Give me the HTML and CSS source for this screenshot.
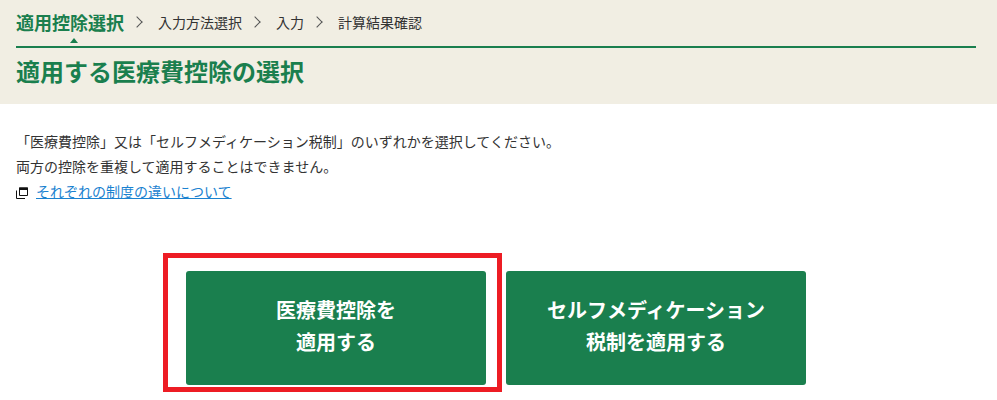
FILE: index.html
```html
<!DOCTYPE html>
<html lang="ja">
<head>
<meta charset="utf-8">
<meta name="viewport" content="width=device-width,initial-scale=1">
<title>適用する医療費控除の選択</title>
<link rel="stylesheet" href="styles.css">
</head>
<body>

<!-- ======= HEADER ======= -->
<header class="page-head">
  <ol class="steps">
    <li class="step current">適用控除選択</li>
    <li class="step">入力方法選択</li>
    <li class="step">入力</li>
    <li class="step">計算結果確認</li>
  </ol>
  <h1 class="page-title">適用する医療費控除の選択</h1>
</header>

<!-- ======= CONTENT ======= -->
<main class="content">
  <p class="lead">「医療費控除」又は「セルフメディケーション税制」のいずれかを選択してください。</p>
  <p class="lead">両方の控除を重複して適用することはできません。</p>
  <p class="lead link-row">
    <svg class="icon-window" viewBox="0 0 12 12" width="12" height="12" aria-hidden="true">
      <path d="M3.5 1v7.5h8V1z" fill="none" stroke="#111"/>
      <path d="M3 .5h9v2.5H3z" fill="#111"/>
      <path d="M.5 3.5v8h8.5" fill="none" stroke="#111"/>
    </svg>
    <a href="#">それぞれの制度の違いについて</a>
  </p>

  <div class="choices">
    <div class="choice">
      <span class="highlight"></span>
      <button class="btn-apply">医療費控除を<br>適用する</button>
    </div>
    <div class="choice">
      <button class="btn-apply">セルフメディケーション<br>税制を適用する</button>
    </div>
  </div>
</main>

</body>
</html>
```

FILE: styles.css
```css
/* ---------- PALETTE ---------- */
:root{
  --bg-head:#f1eee3;
  --green:#1a7f4e;
  --text:#333;
  --link:#1a82d0;
  --mark:#ed1c24;
}

/* ---------- RESET ---------- */
*{margin:0;padding:0;box-sizing:border-box;}
body{background:#fff;color:var(--text);font-family:"Noto Sans CJK JP","Liberation Sans",sans-serif;font-size:14px;}

/* ---------- HEADER ---------- */
.page-head{background:var(--bg-head);height:104px;padding:0 21px 0 16px;}
.steps{display:flex;align-items:center;list-style:none;height:48px;border-bottom:2px solid var(--green);}
.step{position:relative;line-height:20px;padding-bottom:3px;}
.step + .step{margin-left:17px;padding-left:17px;}
.step + .step::before{content:"";position:absolute;left:-8px;top:6px;width:7px;height:7px;border-top:1.5px solid #555;border-right:1.5px solid #555;transform:rotate(45deg);}
.step.current{font-size:18px;font-weight:700;color:var(--green);}
.step.current::after{content:"";position:absolute;left:50%;bottom:-8px;border:4px solid transparent;border-top:0;border-bottom:5px solid var(--green);}
.page-title{font-size:24px;font-weight:700;line-height:34px;margin-top:6px;color:var(--green);}

/* ---------- CONTENT ---------- */
.content{padding:25px 21px 8px 16px;}
.lead{line-height:25px;}
.link-row{display:flex;align-items:center;}
.icon-window{margin-right:8px;margin-top:3px;}
.link-row a{color:var(--link);}

/* ---------- BUTTONS ---------- */
.choices{display:flex;justify-content:center;gap:20px;margin-top:67px;}
.choice{position:relative;}
.btn-apply{display:block;width:300px;height:114px;padding-bottom:4px;border:0;border-radius:3px;background:var(--green);color:#fff;font:700 20px/32px "Noto Sans CJK JP","Liberation Sans",sans-serif;cursor:pointer;}
.highlight{position:absolute;left:-23px;top:-18px;width:339px;height:139px;border:5px solid var(--mark);}
```
